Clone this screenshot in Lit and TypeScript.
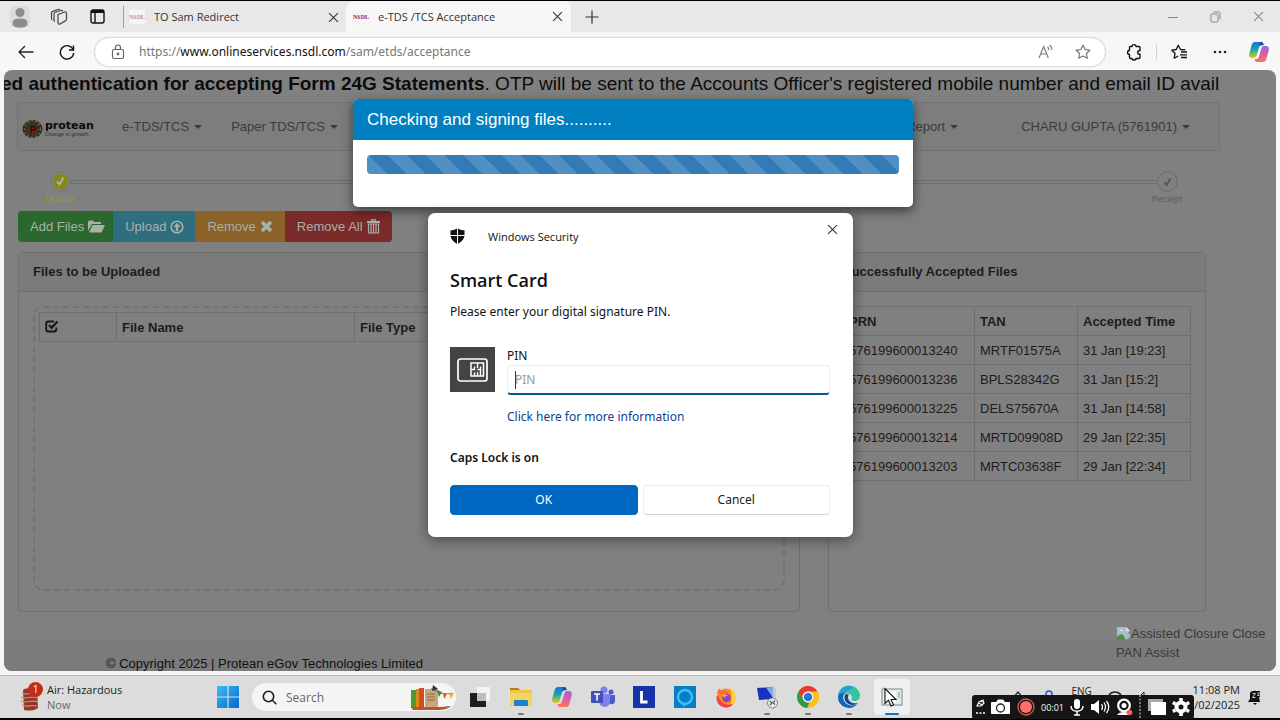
import { LitElement, html, css, svg } from "lit";
import { customElement } from "lit/decorators.js";

const caret = html`<span class="caret"></span>`;

const cross = html`<svg width="11" height="11" viewBox="0 0 10 10"><path d="M1 1 9 9M9 1 1 9" stroke="currentColor" stroke-width="1" fill="none"/></svg>`;

const copilot = (size: number, id: string) => html`<svg width=${size} height=${size} viewBox="0 0 22 22">
  <defs>
    <linearGradient id=${id + "a"} x1="0" y1="0" x2="0" y2="1"><stop offset="0" stop-color="#1877d8"/><stop offset=".45" stop-color="#17a2b8"/><stop offset=".75" stop-color="#7fc04a"/><stop offset="1" stop-color="#f2c12e"/></linearGradient>
    <linearGradient id=${id + "b"} x1="0" y1="0" x2="0" y2="1"><stop offset="0" stop-color="#8f6be8"/><stop offset=".5" stop-color="#dd5aa8"/><stop offset="1" stop-color="#fb7b4a"/></linearGradient>
  </defs>
  <path d="M7 1h6c1.500 0 2 1 2.500 3h-2c-1.500 0-2 1-2.500 2.500L8.800 14c-.5 1.800-1.300 3-3 3H4c-2.500 0-3.400-2-2.700-4.500l2.200-8C4 2.500 5 1 7 1z" fill="url(#${id}a)"/>
  <path d="M15 21H9c-1.500 0-2-1-2.500-3h2c1.500 0 2-1 2.500-2.500L13.200 8c.5-1.800 1.300-3 3-3H18c2.500 0 3.400 2 2.700 4.500l-2.200 8C18 19.500 17 21 15 21z" fill="url(#${id}b)"/>
  <path d="M12 1h1.500c1.300 0 1.900 1.500 2.300 3.200h-2.500c-1.300 0-2 .9-2.400 2.300z" fill="#1450a8"/>
</svg>`;

@customElement("browser-chrome")
export class BrowserChrome extends LitElement {
  static styles = css`
    :host { display: block; font: 12px/16px "Open Sans", "Noto Sans", sans-serif; color: #333; }
    button { border: 0; background: none; padding: 0; margin: 0; color: inherit; display: flex; align-items: center; justify-content: center; font: inherit; }
    svg { display: block; flex: none; }
    .strip { display: flex; height: 31px; border-top: 1px solid #000; background: #e8e8e8; }
    .tools { display: flex; width: 123px; }
    .tools button { width: 39px; }
    .tab { display: flex; align-items: center; gap: 9px; width: 223px; box-sizing: border-box; padding: 0 7px 0 5px; font-size: 11px; }
    .tab.idle { border-left: 1px solid #a0a0a0; margin: 5px 0; height: 22px; }
    .tab.active { background: #f7f7f7; border-radius: 8px 8px 0 0; width: 225px; padding: 0 8px 0 7px; }
    .title { flex: 1; white-space: nowrap; overflow: hidden; }
    .fav { font: bold 6px/14px "Liberation Serif", serif; color: #a8202a; background: #f5f5f5; width: 16px; text-align: center; }
    .idle .fav { color: #c98a90; }
    .tab button { width: 12px; height: 12px; }
    .plus { width: 42px; }
    .win { display: flex; margin-left: auto; color: #888; }
    .win button { width: 43px; }
    .bar { display: flex; align-items: center; box-sizing: border-box; height: 38px; padding-top: 1px; background: #f7f7f7; }
    .bar > button { width: 41px; height: 30px; }
    .bar > .back { margin-left: 5px; }
    .address { flex: 1; display: flex; align-items: center; height: 28px; background: #fff; border: 1px solid #dcdcdc; border-radius: 15px; margin: 0 6px 0 7px; padding: 0 12px 0 16px; box-shadow: 0 0 1px #ccc; }
    .url { flex: 1; margin-left: 14px; color: #777; text-decoration: none; white-space: nowrap; font-family: "Noto Sans", sans-serif; }
    .url b { font-weight: 400; color: #111; }
    .address button { width: 20px; margin-left: 17px; color: #777; }
    .sep { width: 1px; height: 16px; background: #d0d0d0; }
    .bar > .ext { width: 44px; }
    .bar > .favs { width: 45px; }
    .bar > .more { width: 36px; }
    .bar > .cop { width: 42px; }
  `;
  render() {
    return html`
      <div class="strip">
        <div class="tools">
          <button aria-label="Profile"><svg width="20" height="22" viewBox="0 0 20 22"><rect width="20" height="22" rx="6" fill="#dcdcdc"/><circle cx="10" cy="6.500" r="4.500" fill="#8c8c8c"/><path d="M2.500 17c0-3.500 3-4.500 7.500-4.500s7.500 1 7.500 4.500-3 4.500-7.500 4.500-7.500-1-7.500-4.500z" fill="#8c8c8c"/></svg></button>
          <button aria-label="Workspaces"><svg width="18" height="18" viewBox="0 0 18 18" fill="none" stroke="#444" stroke-width="1.200"><path d="M8 6.500 14.500 4c1-.4 2 .2 2 1.200v6c0 .8-.4 1.400-1.100 1.700L10 16c-1 .4-2-.2-2-1.200z"/><path d="M5 13.500c-.6-.2-1-.7-1-1.400V6c0-.8.5-1.500 1.200-1.800L11 2.500c.8-.3 1.500 0 1.900.7"/><path d="M2.500 12C1.800 11.800 1.500 11 1.500 10.500V5.200c0-.8.500-1.500 1.200-1.800L8 1.500c.8-.3 1.500 0 1.900.6"/></svg></button>
          <button aria-label="Tab actions"><svg width="15" height="15" viewBox="0 0 15 15" fill="none" stroke="#111" stroke-width="1.400"><rect x="1" y="1" width="13" height="13" rx="2"/><path d="M5 4v10" /><path d="M1 2.500h13" stroke-width="3"/></svg></button>
        </div>
        <div class="tab idle"><span class="fav">NSDL</span><span class="title">TO Sam Redirect</span><button aria-label="Close tab">${cross}</button></div>
        <div class="tab active"><span class="fav">NSDL</span><span class="title">e-TDS /TCS Acceptance</span><button aria-label="Close tab">${cross}</button></div>
        <button class="plus" aria-label="New tab"><svg width="14" height="14" viewBox="0 0 14 14"><path d="M7 .500v13M.5 7h13" stroke="#333" stroke-width="1.200"/></svg></button>
        <div class="win">
          <button aria-label="Minimize"><svg width="10" height="10" viewBox="0 0 10 10"><path d="M0 5.500h10" stroke="currentColor"/></svg></button>
          <button aria-label="Restore"><svg width="11" height="12" viewBox="0 0 11 12" fill="none" stroke="currentColor"><rect x="1" y="3" width="7" height="8" rx="1"/><path d="M3.500 1H9c.6 0 1 .4 1 1v6.500"/></svg></button>
          <button aria-label="Close">${cross}</button>
        </div>
      </div>
      <div class="bar">
        <button class="back" aria-label="Back"><svg width="16" height="14" viewBox="0 0 16 14" fill="none" stroke="#222" stroke-width="1.300"><path d="M15.500 7H1M7 1 1 7l6 6"/></svg></button>
        <button aria-label="Refresh"><svg width="16" height="16" viewBox="0 0 16 16" fill="none" stroke="#111" stroke-width="1.400"><path d="M14.300 6A6.700 6.700 0 1 0 14.700 9"/><path d="M14.500 1.500V6H10"/></svg></button>
        <div class="address">
          <svg width="14" height="16" viewBox="0 0 14 16" fill="none" stroke="#666" stroke-width="1.200"><rect x="1.500" y="5.500" width="11" height="9" rx="1.500"/><path d="M4.500 5.500V3.500a2.500 2.500 0 0 1 5 0v2"/><circle cx="7" cy="10" r=".8" fill="#666"/></svg>
          <a class="url" href="#">https://<b>www.onlineservices.nsdl.com</b>/sam/etds/acceptance</a>
          <button aria-label="Read aloud"><svg width="16" height="16" viewBox="0 0 16 16" fill="none" stroke="currentColor" stroke-width="1.100"><path d="M1 14 5.700 2.500 10.300 14M2.700 10h6"/><path d="M9.500 3c1 .8 1.500 1.800 1.500 3.200M11.500 1c1.800 1.300 2.500 3 2.500 5"/></svg></button>
          <button aria-label="Favorite"><svg width="16" height="16" viewBox="0 0 16 16" fill="none" stroke="currentColor" stroke-width="1.200"><path d="M8 1.200 10.100 5.600l4.800.6-3.500 3.300.9 4.800L8 12l-4.300 2.300.9-4.800L1.100 6.200l4.800-.6z" stroke-linejoin="round"/></svg></button>
        </div>
        <button class="ext" aria-label="Extensions"><svg width="17" height="18" viewBox="0 0 17 18" fill="none" stroke="#111" stroke-width="1.400"><path d="M6 3.500c0-2.500 4-2.500 4 0h3c.7 0 1 .4 1 1V7.500c-3 0-3 3.800 0 3.800V14.500c0 .7-.4 1-1 1h-3c0 2-4 2-4 0H4.500c-.7 0-1-.4-1-1v-3c-2.600 0-2.600-4 0-4v-3c0-.6.4-1 1-1z" stroke-linejoin="round"/></svg></button>
        <span class="sep"></span>
        <button class="favs" aria-label="Favorites"><svg width="17" height="16" viewBox="0 0 17 16" fill="none" stroke="#111" stroke-width="1.300"><path d="M14.500 5.800 9.500 5.500 7.200 1.200 5.200 5.500.8 6.200 4 9.300 3.200 14.200l4-2.200" stroke-linejoin="round"/><path d="M10 8h6M9 10.800h7M10 13.500h6"/></svg></button>
        <button class="more" aria-label="Settings"><svg width="14" height="4" viewBox="0 0 14 4" fill="#222"><circle cx="2" cy="2" r="1.300"/><circle cx="7" cy="2" r="1.300"/><circle cx="12" cy="2" r="1.300"/></svg></button>
        <button class="cop" aria-label="Copilot">${copilot(22, "c1")}</button>
      </div>`;
  }
}

const accepted = [
  ["576199600013240", "MRTF01575A", "31 Jan [19:23]"],
  ["576199600013236", "BPLS28342G", "31 Jan [15:2]"],
  ["576199600013225", "DELS75670A", "31 Jan [14:58]"],
  ["576199600013214", "MRTD09908D", "29 Jan [22:35]"],
  ["576199600013203", "MRTC03638F", "29 Jan [22:34]"],
];

@customElement("portal-page")
export class PortalPage extends LitElement {
  static styles = css`
    :host { display: flex; flex-direction: column; position: relative; overflow: hidden; border-radius: 8px; background: #808080; color: #1c1c1c; font: 13px/19px "Liberation Sans", Arial, sans-serif; }
    svg { display: block; flex: none; }
    a { color: inherit; text-decoration: none; }
    .news { margin-right: 56px; overflow: hidden; white-space: nowrap; font-size: 19px; line-height: 24px; padding-top: 2px; text-indent: -3px; color: #0c0c0c; }
    nav { display: flex; align-items: center; height: 47px; margin: 6px 56px 0 13px; border: 1px solid #737373; border-radius: 3px; background: #7d7d7d; color: #3c3c3c; }
    .logo { display: flex; align-items: center; gap: 2px; width: 100px; padding-left: 4px; box-sizing: border-box; color: #0a0a0a; margin-top: 5px; }
    .word { display: flex; flex-direction: column; font: bold 11px/10px "DejaVu Sans", sans-serif; }
    .word small { font: 5px/6px "DejaVu Sans", sans-serif; color: #222; }
    nav .item { display: flex; align-items: center; gap: 5px; margin-right: 29px; white-space: nowrap; }
    .logo + .item { margin-left: 4px; }
    nav .push { margin-left: auto; margin-right: 63px; }
    .caret { border: 4px solid transparent; border-top-color: currentColor; border-bottom: 0; }
    .steps { display: flex; align-items: flex-start; margin: 20px 94px 0 41px; height: 33px; color: #5e5e5e; }
    .step { display: flex; flex-direction: column; align-items: center; width: 30px; font-size: 9px; line-height: 12px; }
    .step svg { margin-bottom: 1px; }
    .step.done { color: #9a9c24; }
    .rail { flex: 1; height: 2px; border: solid #6c6c6c; border-width: 1px 0; margin: 9px -5px 0; }
    .actions { display: flex; margin: 7px 14px 0; }
    .actions button { display: flex; align-items: center; gap: 4px; height: 31px; border: 0; padding: 0 8px 0 12px; font: inherit; color: #a9b0a9; white-space: nowrap; }
    .add { background: #2b682e; border-radius: 4px 0 0 4px; }
    .up { background: #2e6e7e; }
    .rem { background: #8c6228; }
    .all { background: #7a2a29; border-radius: 0 4px 4px 0; }
    .actions .up { padding-right: 11px; }
    .actions .rem, .actions .all { padding-right: 12px; }
    .panels { display: grid; grid-template-columns: 782fr 378fr; gap: 28px; margin: 10px 70px 0 14px; height: 360px; }
    .panel { border: 1px solid #707070; border-radius: 4px; display: flex; flex-direction: column; min-width: 0; box-sizing: border-box; }
    h2 { margin: 0; font-size: 13px; line-height: 38px; padding-left: 14px; border-bottom: 1px solid #707070; background: #7b7b7b; }
    .drop { flex: 1; margin: 14px 14px 20px; border: 2px dashed #737373; border-radius: 10px; padding: 4px; }
    table { border-collapse: collapse; width: 100%; table-layout: fixed; }
    th, td { border: 1px solid #6f6f6f; height: 29px; padding: 0 5px; text-align: left; white-space: nowrap; box-sizing: border-box; }
    .c1 { width: 77px; }
    .c2 { width: 238px; }
    .accepted { margin: 14px 14px 0; }
    .n1 { width: 131px; }
    .n2 { width: 103px; }
    .tick { display: block; position: relative; width: 14px; height: 14px; }
    .tick input { position: absolute; inset: 0; margin: 0; opacity: 0; }
    footer { margin-top: 29px; flex: 1; background: #7b7b7b; padding: 15px 0 0 102px; line-height: 15px; color: #101010; }
    .assist { position: absolute; right: 8px; bottom: 9px; width: 152px; color: #3a3a3a; }
    .assist span { display: flex; align-items: center; white-space: nowrap; }
    .modal { position: absolute; top: 29px; left: calc(50% - 287px); width: 560px; height: 108px; background: #fff; border-radius: 5px; box-shadow: 0 4px 12px rgba(0, 0, 0, 0.55); overflow: hidden; }
    .modal h3 { margin: 0; font-weight: 400; font-size: 17px; line-height: 41px; padding-left: 14px; color: #fff; background: #0080c0; }
    .progress { margin: 15px 14px 0; height: 19px; border-radius: 4px; background: #337ab7 linear-gradient(45deg, rgba(255, 255, 255, 0.15) 25%, transparent 25%, transparent 50%, rgba(255, 255, 255, 0.15) 50%, rgba(255, 255, 255, 0.15) 75%, transparent 75%) 21px 0 / 38px 38px; }
  `;
  render() {
    return html`
      <div class="news"><b>ed authentication for accepting Form 24G Statements</b>. OTP will be sent to the Accounts Officer's registered mobile number and email ID available</div>
      <nav>
        <a class="logo" href="#" aria-label="Protean">
          <svg width="21" height="20" viewBox="0 0 21 20"><ellipse cx="10.500" cy="10" rx="10" ry="9" fill="#2b2620"/><g fill="none" stroke-width="1.600" stroke-dasharray="2 2"><circle cx="10.500" cy="10" r="8" stroke="#77603a"/><circle cx="10.500" cy="10" r="6" stroke="#2c5a3c"/></g><circle cx="10.500" cy="10" r="4.500" fill="#7c1d1a"/><path d="M9 14V7.500h2.500a1.700 1.700 0 0 1 0 3.500H9" fill="none" stroke="#1d100c" stroke-width="1.300"/></svg>
          <span class="word">protean<small>Change is growth</small></span>
        </a>
        <a class="item" href="#">e-TDS/TCS ${caret}</a>
        <a class="item" href="#">Paper TDS/TCS ${caret}</a>
        <a class="item push" href="#">Report ${caret}</a>
        <a class="item" href="#">CHARU GUPTA (5761901) ${caret}</a>
      </nav>
      <div class="steps">
        <div class="step done"><svg width="21" height="21" viewBox="0 0 21 21"><circle cx="10.500" cy="10.500" r="9.500" fill="#858585" stroke="#747474"/><circle cx="10.500" cy="10.500" r="7.800" fill="#85891a"/><path d="M7 10.500 9.500 13.500 13.500 6.500" fill="none" stroke="#b4b5a0" stroke-width="1.800"/></svg>Upload</div>
        <div class="rail"></div>
        <div class="step"><svg width="21" height="21" viewBox="0 0 21 21"><circle cx="10.500" cy="10.500" r="9.800" fill="#808080" stroke="#6a6a6a"/><path d="M7.500 11 9.500 14 13.500 7.500" fill="none" stroke="#555" stroke-width="1.800"/></svg>Reciept</div>
      </div>
      <div class="actions">
        <button class="add">Add Files <svg width="17" height="13" viewBox="0 0 17 13" fill="currentColor"><path d="M0 11V2l1-1.500h4L6 2h7v2H4z"/><path d="M4.500 5H17l-3.500 7.500H1z"/></svg></button>
        <button class="up">Upload <svg width="14" height="14" viewBox="0 0 14 14" fill="none" stroke="currentColor" stroke-width="1.600"><circle cx="7" cy="7" r="5.800"/><path d="M7 11V5" stroke-width="2.400"/><path d="M7 2.800 3.600 7h6.800z" fill="currentColor" stroke="none"/></svg></button>
        <button class="rem">Remove <svg width="13" height="13" viewBox="0 0 13 13"><path d="M2 2 11 11M11 2 2 11" stroke="currentColor" stroke-width="3.600"/></svg></button>
        <button class="all">Remove All <svg width="13" height="15" viewBox="0 0 13 15" fill="none" stroke="currentColor"><path d="M0 3h13" stroke-width="1.800"/><path d="M4.500 2.500V.8h4v1.700" stroke-width="1.300"/><path d="M1.500 5h10v9h-10zM4 5v9M6.500 5v9M9 5v9" stroke-width="1.200"/></svg></button>
      </div>
      <div class="panels">
        <section class="panel">
          <h2>Files to be Uploaded</h2>
          <div class="drop">
            <table>
              <tr>
                <th class="c1"><label class="tick"><input type="checkbox" checked aria-label="Select all files" /><svg width="14" height="13" viewBox="0 0 14 13" fill="none" stroke="#161616" stroke-width="1.800"><path d="M9 1.500H3.500C2 1.500 1.200 2.300 1.200 3.700v5.500c0 1.500.8 2.300 2.300 2.300H9c1.500 0 2.300-.8 2.300-2.300V7.500"/><path d="M4 5 6.500 7.800 12.500 1.500" stroke-width="2.200"/></svg></label></th>
                <th class="c2">File Name</th>
                <th>File Type</th>
              </tr>
            </table>
          </div>
        </section>
        <section class="panel">
          <h2>Successfully Accepted Files</h2>
          <div class="accepted">
            <table>
              <tr><th class="n1">PRN</th><th class="n2">TAN</th><th>Accepted Time</th></tr>
              ${accepted.map((r) => html`<tr>${r.map((c) => html`<td>${c}</td>`)}</tr>`)}
            </table>
          </div>
        </section>
      </div>
      <footer>© Copyright 2025 | Protean eGov Technologies Limited</footer>
      <a class="assist" href="#"><span><svg width="15" height="15" viewBox="0 0 15 15"><path d="M1 1h9l4 4-2 2 2 2v2l-4 3H1z" fill="#a9bccb"/><path d="M10 1v4h4z" fill="#dfe7ee"/><path d="M1 14v-3c2-2 4-4 6-2l3 5z" fill="#4d8e3c"/><path d="M3 5c0-2 4-2 4 0z" fill="#d9e3ea"/></svg>Assisted Closure Close</span>PAN Assist</a>
      <div class="modal" role="dialog" aria-label="Checking and signing files">
        <h3>Checking and signing files..........</h3>
        <div class="progress" role="progressbar"></div>
      </div>`;
  }
}

@customElement("security-dialog")
export class SecurityDialog extends LitElement {
  static styles = css`
    :host { display: block; box-sizing: border-box; background: #fff; border-radius: 7px; padding: 9px 23px 22px 22px; color: #111; font: 12px/18px "Noto Sans", "Open Sans", sans-serif; box-shadow: 0 3px 14px rgba(0, 0, 0, 0.45); }
    svg { display: block; flex: none; }
    header { display: flex; align-items: center; height: 28px; font-family: "Open Sans", sans-serif; font-size: 11px; }
    header span { flex: 1; margin-left: 23px; margin-top: 2px; }
    .x { border: 0; background: none; padding: 0; margin: 0 -8px 14px 0; color: #333; }
    h1 { font: 600 18px/24px "Open Sans", sans-serif; margin: 18px 0 11px; }
    p { margin: 0; }
    .cred { display: flex; gap: 12px; margin: 26px 0 23px; }
    .card { width: 45px; height: 45px; background: #444; display: flex; align-items: center; justify-content: center; }
    .field { flex: 1; display: flex; flex-direction: column; min-width: 0; }
    .field input { box-sizing: border-box; width: 100%; height: 30px; border: 1px solid #ececec; border-bottom: 2px solid #005a8c; border-radius: 4px; padding: 0 7px; outline: 0; font: inherit; background: linear-gradient(#333, #333) 7px 5px / 1px 18px no-repeat #fff; }
    .field input::placeholder { color: #999; }
    .field a { color: #10418c; text-decoration: none; margin-top: 13px; }
    .caps { font-weight: 600; margin-bottom: 18px; }
    .buttons { display: flex; gap: 5px; }
    .buttons button { flex: 1; height: 30px; border-radius: 4px; font: inherit; background: #fff; border: 1px solid #ececec; border-bottom-color: #d0d0d0; color: #222; }
    .buttons .ok { background: #0067c0; border-color: #0067c0; color: #fff; }
  `;
  render() {
    return html`
      <header>
        <svg width="15" height="16" viewBox="0 0 15 16"><path d="M7.500 0C6 1.500 3 2.300.5 2.300V7c0 4 3 7 7 9 4-2 7-5 7-9V2.300C12 2.300 9 1.500 7.500 0z" fill="#111"/><path d="M7.500 0v16M0 7.500h15" stroke="#fff"/></svg>
        <span>Windows Security</span>
        <button class="x" aria-label="Close">${cross}</button>
      </header>
      <h1>Smart Card</h1>
      <p>Please enter your digital signature PIN.</p>
      <div class="cred">
        <div class="card"><svg width="31" height="24" viewBox="0 0 31 24" fill="none" stroke="#fff"><rect x="1" y="1" width="29" height="22" rx="2.500" stroke-width="1.700"/><path d="M14 5h12.500v13H14z" stroke-width="1.500"/><path d="M14 11.500h3.500v-3M17.500 18v-3.500M20.500 5v5M20.500 11.500h3v-3M23.500 18v-6M20.500 18v-4" stroke-width="1.400"/></svg></div>
        <div class="field"><label for="pin">PIN</label><input id="pin" type="password" placeholder="PIN" /><a href="#">Click here for more information</a></div>
      </div>
      <p class="caps">Caps Lock is on</p>
      <div class="buttons"><button class="ok">OK</button><button>Cancel</button></div>`;
  }
}

const apps = [
  { name: "Task view", run: false, icon: svg`<rect x="9" y="2" width="13" height="14" fill="#f4f4f4"/><path d="M2 8h16v14H2z" fill="#1e1e1e"/><path d="M9 8h9v8H9z" fill="#bdbdbd"/>` },
  { name: "File Explorer", run: true, icon: svg`<path d="M1 3h8l2 2v3H1z" fill="#b47a14"/><rect x="1" y="5" width="22" height="16" rx="1" fill="#f3c746"/><path d="M1 8h22v12H1z" fill="#f7d264"/><path d="M5 21v-4.500c0-1 .6-1.500 1.500-1.500h11c.9 0 1.500.5 1.500 1.500V21z" fill="#1a84c8"/>` },
  { name: "Copilot", run: false, icon: null },
  { name: "Teams", run: false, icon: svg`<circle cx="13" cy="5" r="3.500" fill="#7b83eb"/><circle cx="20" cy="7" r="2.500" fill="#5059c9"/><path d="M17 10h7v6c0 4-5 4-6 2z" fill="#5059c9"/><path d="M8 9h11v8c0 6-10 7-11 0z" fill="#7b83eb"/><rect y="6" width="12" height="12" rx="1" fill="#4350b5"/><path d="M3 9h6M6 9v6.500" stroke="#fff" stroke-width="1.600"/>` },
  { name: "L app", run: false, icon: svg`<path d="M1 1h22v22H1z" fill="#1733a8"/><path d="M9.500 6v11h6" fill="none" stroke="#fff" stroke-width="2.800"/>` },
  { name: "Assistant", run: false, icon: svg`<path d="M1 1h22v22H1z" fill="#0b7cc8"/><circle cx="12" cy="12" r="7" fill="none" stroke="#35c4f5" stroke-width="2.400"/><path d="M9 18.500 11 22l2-3z" fill="#35c4f5"/>` },
  { name: "Firefox", run: false, icon: svg`<circle cx="12" cy="13" r="9.500" fill="#ff8a1e"/><path d="M15 2c3 2 6.500 5 6.500 11 0 4-3 7.500-6 8.500 3-4 3-14-.5-19.500z" fill="#ffcf3a"/><path d="M3 8 5 3.500 8 6c4-1 7 1 7 3l-4 1z" fill="#ff6a2e"/><path d="M2.500 12c0 7 5 10.500 9.500 10.500 3 0 6-1.500 7-3.500-6 2-13 0-15-9z" fill="#f53c50"/><circle cx="12.500" cy="13" r="4.300" fill="#8a45c8"/><path d="M8 10c2-1.500 5-.5 6 1-2-.5-3 .5-3 2z" fill="#ffb02e"/>` },
  { name: "Remote Desktop", run: true, icon: svg`<path d="M2 3 18 2v12L4 15z" fill="#1a33b8"/><path d="M11 2.500 18 2v11z" fill="#7fa6ee"/><path d="M18 2l3 1v11l-3 0z" fill="#c9ccd2"/><path d="M6 17h9l3 3H7z" fill="#d8d8d8"/><circle cx="17.500" cy="18" r="5" fill="#e8e8e8" stroke="#888"/><path d="M15 16l2 2-2 2M20 15.500l-2 2 2 2" fill="none" stroke="#555" stroke-width="1.100"/>` },
  { name: "Chrome", run: true, icon: svg`<circle cx="12" cy="12" r="11" fill="#fbc116"/><path d="M2.500 6.500A11 11 0 0 1 21.500 6.500H12a5.500 5.500 0 0 0-5 8z" fill="#e33b2e"/><path d="M2.500 6.500 7.200 14.700A5.500 5.500 0 0 0 13.500 17.300L11 23A11 11 0 0 1 2.500 6.500z" fill="#2a9d4b"/><circle cx="12" cy="12" r="5.400" fill="#fff"/><circle cx="12" cy="12" r="4.300" fill="#2c72e8"/>` },
  { name: "Edge", run: true, icon: svg`<path d="M1 12A11 11 0 0 1 23 11c0 4-3 5-5.500 5-3 0-3.500-1-3-2 1.500-3-1-5.500-4.500-5.500C5 8.500 1.500 11 1 12z" fill="#34c3a0"/><path d="M1 12A11 11 0 0 1 14 1.200C19 2 12 6 10 6 5 6 1.500 9 1 12z" fill="#2a9fe0"/><path d="M1 12c.5-3 4-5 8-4.500-4 2-4 9 1.500 12 3 1.800 8 1 10-.7A11 11 0 0 1 1 12z" fill="#1464b8"/><path d="M8.500 9c-3 5 1 11 7 11 3 0 5-1.500 5.500-2-4 1.200-10-.5-10-6 0-1.200.5-2 1-2.500z" fill="#0c4a98"/>` },
];

@customElement("task-bar")
export class TaskBar extends LitElement {
  static styles = css`
    :host { display: flex; position: relative; align-items: center; box-sizing: border-box; height: 45px; border-top: 1px solid #b5b5b5; border-bottom: 2px solid #000; background: #dcdcdc; color: #222; font: 11px/15px "Open Sans", "Noto Sans", sans-serif; padding: 0 18px 0 20px; }
    svg { display: block; flex: none; }
    button { border: 0; background: none; padding: 0; margin: 0; font: inherit; color: inherit; display: flex; align-items: center; justify-content: center; }
    .weather { width: 187px; gap: 4px; justify-content: flex-start; text-align: left; }
    .weather small { display: block; font-size: 11px; color: #666; }
    .start { width: 42px; height: 40px; }
    .search { display: flex; align-items: center; width: 204px; height: 28px; box-sizing: border-box; border-radius: 14px; background: #f5f5f5; padding: 0 1px 0 10px; margin: 0 3px; }
    .search input { flex: 1; min-width: 0; border: 0; background: none; outline: 0; font: inherit; font-size: 12px; padding: 0 0 0 9px; }
    .search input::placeholder { color: #666; }
    .app { width: 41px; height: 36px; flex-direction: column; position: relative; }
    .app.run::after { content: ""; position: absolute; bottom: 0; width: 6px; height: 2px; border-radius: 1px; background: #777; }
    .app.now { width: 36px; margin-left: 5px; background: #efefef; border-radius: 4px; }
    .app.now::after { content: ""; position: absolute; bottom: 0; width: 14px; height: 2px; border-radius: 1px; background: #0b78c4; }
    .tray { margin-left: auto; display: flex; align-items: center; gap: 8px; }
    .status { display: flex; gap: 17px; margin-right: 8px; }
    .net { display: flex; gap: 14px; margin-right: 30px; }
    .lang { align-self: flex-start; font-size: 10px; line-height: 11px; margin-top: 4px; margin-right: 8px; }
    .clock { text-align: right; }
    .rec { position: absolute; right: 86px; bottom: -1px; height: 24px; width: 222px; box-sizing: border-box; border-radius: 3px; background: #151515; color: #fff; display: flex; align-items: center; justify-content: space-between; padding: 0 4px; font-size: 9px; }
  `;
  render() {
    return html`
      <button class="weather">
        <svg width="23" height="30" viewBox="0 0 23 30"><path d="M3 8c4-3 10-1 14-2l1 20c-4 3-10 3-14 2z" fill="#8f3a26"/><path d="M2 11c5 3 10-2 16 1M1 15c5 3 11-2 17 1M1 19c5 3 11-2 17 1M2 23c5 3 10-1 15 1" stroke="#d9896b" stroke-width="1.200" fill="none"/><circle cx="15.500" cy="7.500" r="7.500" fill="#c42b1c"/><text x="15.500" y="11" font-size="10" text-anchor="middle" fill="#fff">1</text></svg>
        <span>Air: Hazardous<small>Now</small></span>
      </button>
      <button class="start" aria-label="Start"><svg width="22" height="22" viewBox="0 0 22 22"><defs><linearGradient id="w" x1="0" y1="0" x2="1" y2="1"><stop offset="0" stop-color="#3cbcf4"/><stop offset="1" stop-color="#0567cc"/></linearGradient></defs><path d="M0 0h10.400v10.400H0zM11.600 0H22v10.400H11.600zM0 11.600h10.400V22H0zM11.600 11.600H22V22H11.600z" fill="url(#w)"/></svg></button>
      <label class="search">
        <svg width="15" height="15" viewBox="0 0 15 15" fill="none" stroke="#222" stroke-width="1.600"><circle cx="6.500" cy="6.500" r="5.200"/><path d="M10.300 10.300 14.300 14.300"/></svg>
        <input type="text" placeholder="Search" aria-label="Search" />
        <svg width="46" height="26" viewBox="0 0 46 26"><path d="M2 6h5v18H2z" fill="#4f9a2e"/><path d="M7 5h3v19H7z" fill="#d88a1e"/><path d="M10 4h5v20h-5z" fill="#d9481f"/><path d="M16 5h13v18H16z" fill="#c9a77c"/><path d="M18 10h8M18 13h8M18 16h8" stroke="#8c6a42"/><path d="M2 23h30l10-1c-3 3-8 4-14 4H4z" fill="#b8552f"/><path d="M22 4c6 5 14 7 22 5" stroke="#666" fill="none" stroke-width=".8"/><path d="M24 1 29 5l-6 2z" fill="#333"/><path d="M28 6l5 2-3 5z" fill="#2f8a3c"/><path d="M34 9l4 1-3 5z" fill="#e2532a"/><path d="M40 10l5-1-3 6z" fill="#e9b82c"/></svg>
      </label>
      ${apps.map((a, i) => html`<button class="app ${a.run ? "run" : ""}" aria-label=${a.name}>${a.icon ? html`<svg width="24" height="24" viewBox="0 0 24 24">${a.icon}</svg>` : copilot(22, "t" + i)}</button>`)}
      <button class="app now" aria-label="Windows Security"><svg width="24" height="24" viewBox="0 0 24 24"><rect x="2" y="4" width="20" height="16" fill="#e6ebee" stroke="#7d8a92"/><path d="M4 6.500h12v11H4z" fill="#fff"/><path d="M19 7v6" stroke="#888"/><path d="M5 3.500v15l3.500-3.300L11 21l2.500-1-2.400-5.500H16z" fill="#fff" stroke="#111" stroke-width="1.100"/></svg></button>
      <div class="tray">
        <span class="status">
          <svg width="14" height="14" viewBox="0 0 14 14"><path d="M2 8 7 2l5 6" fill="none" stroke="#222" stroke-width="1.300"/></svg>
          <svg width="14" height="14" viewBox="0 0 14 14"><circle cx="7" cy="4" r="3" fill="none" stroke="#2358b8" stroke-width="1.500"/></svg>
        </span>
        <span class="lang">ENG</span>
        <span class="net">
          <svg width="14" height="14" viewBox="0 0 14 14"><path d="M1 5c3-4 9-4 12 0" fill="none" stroke="#222" stroke-width="1.500"/></svg>
          <svg width="14" height="14" viewBox="0 0 14 14"><path d="M2 6h2l4-4v10L4 9H2z" fill="none" stroke="#222"/></svg>
        </span>
        <span class="clock">11:08 PM<br />1/02/2025</span>
        <svg width="14" height="15" viewBox="0 0 14 15"><path d="M2 3c1-2 4-2.500 6-2h4v6h-1l1 5H0l2-3z" fill="#111"/><path d="M5 13h4l-2 2z" fill="#111"/><path d="M4.500 3.500h3l-3 4h3M9.500 3h2l-2 2.500h2" stroke="#ddd" fill="none" stroke-width=".9"/></svg>
      </div>
      <div class="rec">
        <svg width="9" height="18" viewBox="0 0 9 18" fill="none" stroke="#fff"><path d="M1 8 3 4l4-2 1 3-3 3zM2 5l5 2M4 3l3 1" stroke-width="1.200"/><path d="M0 15h9" stroke-dasharray="2 1.500" stroke-width="1.500"/></svg>
        <svg width="19" height="16" viewBox="0 0 19 16"><path d="M1 3h4l2-2.500h5L14 3h4c.6 0 1 .4 1 1v10c0 .6-.4 1-1 1H1c-.6 0-1-.4-1-1V4c0-.6.4-1 1-1z" fill="#fff"/><circle cx="9.500" cy="9" r="4" fill="none" stroke="#222" stroke-width="1.300"/></svg>
        <svg width="18" height="18" viewBox="0 0 18 18"><circle cx="9" cy="9" r="8" fill="none" stroke="#d0614f" stroke-width="1.300"/><circle cx="9" cy="9" r="6" fill="#ff6f70"/></svg>
        <span>00:01</span>
        <svg width="14" height="18" viewBox="0 0 14 18"><rect x="4" y="1" width="6" height="10" rx="3" fill="#fff"/><path d="M1 8c0 7 12 7 12 0M7 13v4M4 17h6" fill="none" stroke="#fff" stroke-width="1.500"/></svg>
        <svg width="19" height="16" viewBox="0 0 19 16"><path d="M0 5h3l5-4v14l-5-4H0z" fill="#fff"/><path d="M10.500 5c1.300 2 1.300 4 0 6M13 3.500c2 3 2 6 0 9M15.500 2c3 4 3 8 0 12" stroke="#fff" stroke-width="1.300" fill="none"/></svg>
        <svg width="17" height="18" viewBox="0 0 17 18"><circle cx="8" cy="7.500" r="5.800" fill="none" stroke="#fff" stroke-width="2.200"/><circle cx="8" cy="7.500" r="2.500" fill="#fff"/><path d="M1 17c2-4 12-4 14 0z" fill="#fff"/><circle cx="13.500" cy="14.500" r="2.800" fill="#f0625e"/></svg>
        <svg width="2" height="24" viewBox="0 0 2 24"><path d="M1 0v24" stroke="#ddd" stroke-dasharray="2 1.500"/></svg>
        <svg width="18" height="18" viewBox="0 0 18 18"><path d="M0 1h15v12H0z" fill="#aaa"/><path d="M3 4h15v13H3z" fill="#fff"/></svg>
        <svg width="18" height="18" viewBox="0 0 18 18"><circle cx="9" cy="9" r="4.500" fill="none" stroke="#fff" stroke-width="4"/><g stroke="#fff" stroke-width="3.600"><path d="M9 0v3M9 15v3M.8 4.500l2.600 1.500M14.600 12l2.600 1.500M17.200 4.500 14.600 6M3.400 12 .8 13.500"/></g></svg>
      </div>`;
  }
}

@customElement("app-root")
export class AppRoot extends LitElement {
  static styles = css`
    :host { display: flex; flex-direction: column; min-height: 100vh; position: relative; background: #f5f5f5; }
    portal-page { flex: 1; margin: 0 4px 4px; }
    .pin { position: absolute; top: 213px; left: calc(50% - 212px); width: 425px; }
  `;
  render() {
    return html`
      <browser-chrome></browser-chrome>
      <portal-page></portal-page>
      <task-bar></task-bar>
      <security-dialog class="pin" role="dialog" aria-label="Windows Security"></security-dialog>`;
  }
}
